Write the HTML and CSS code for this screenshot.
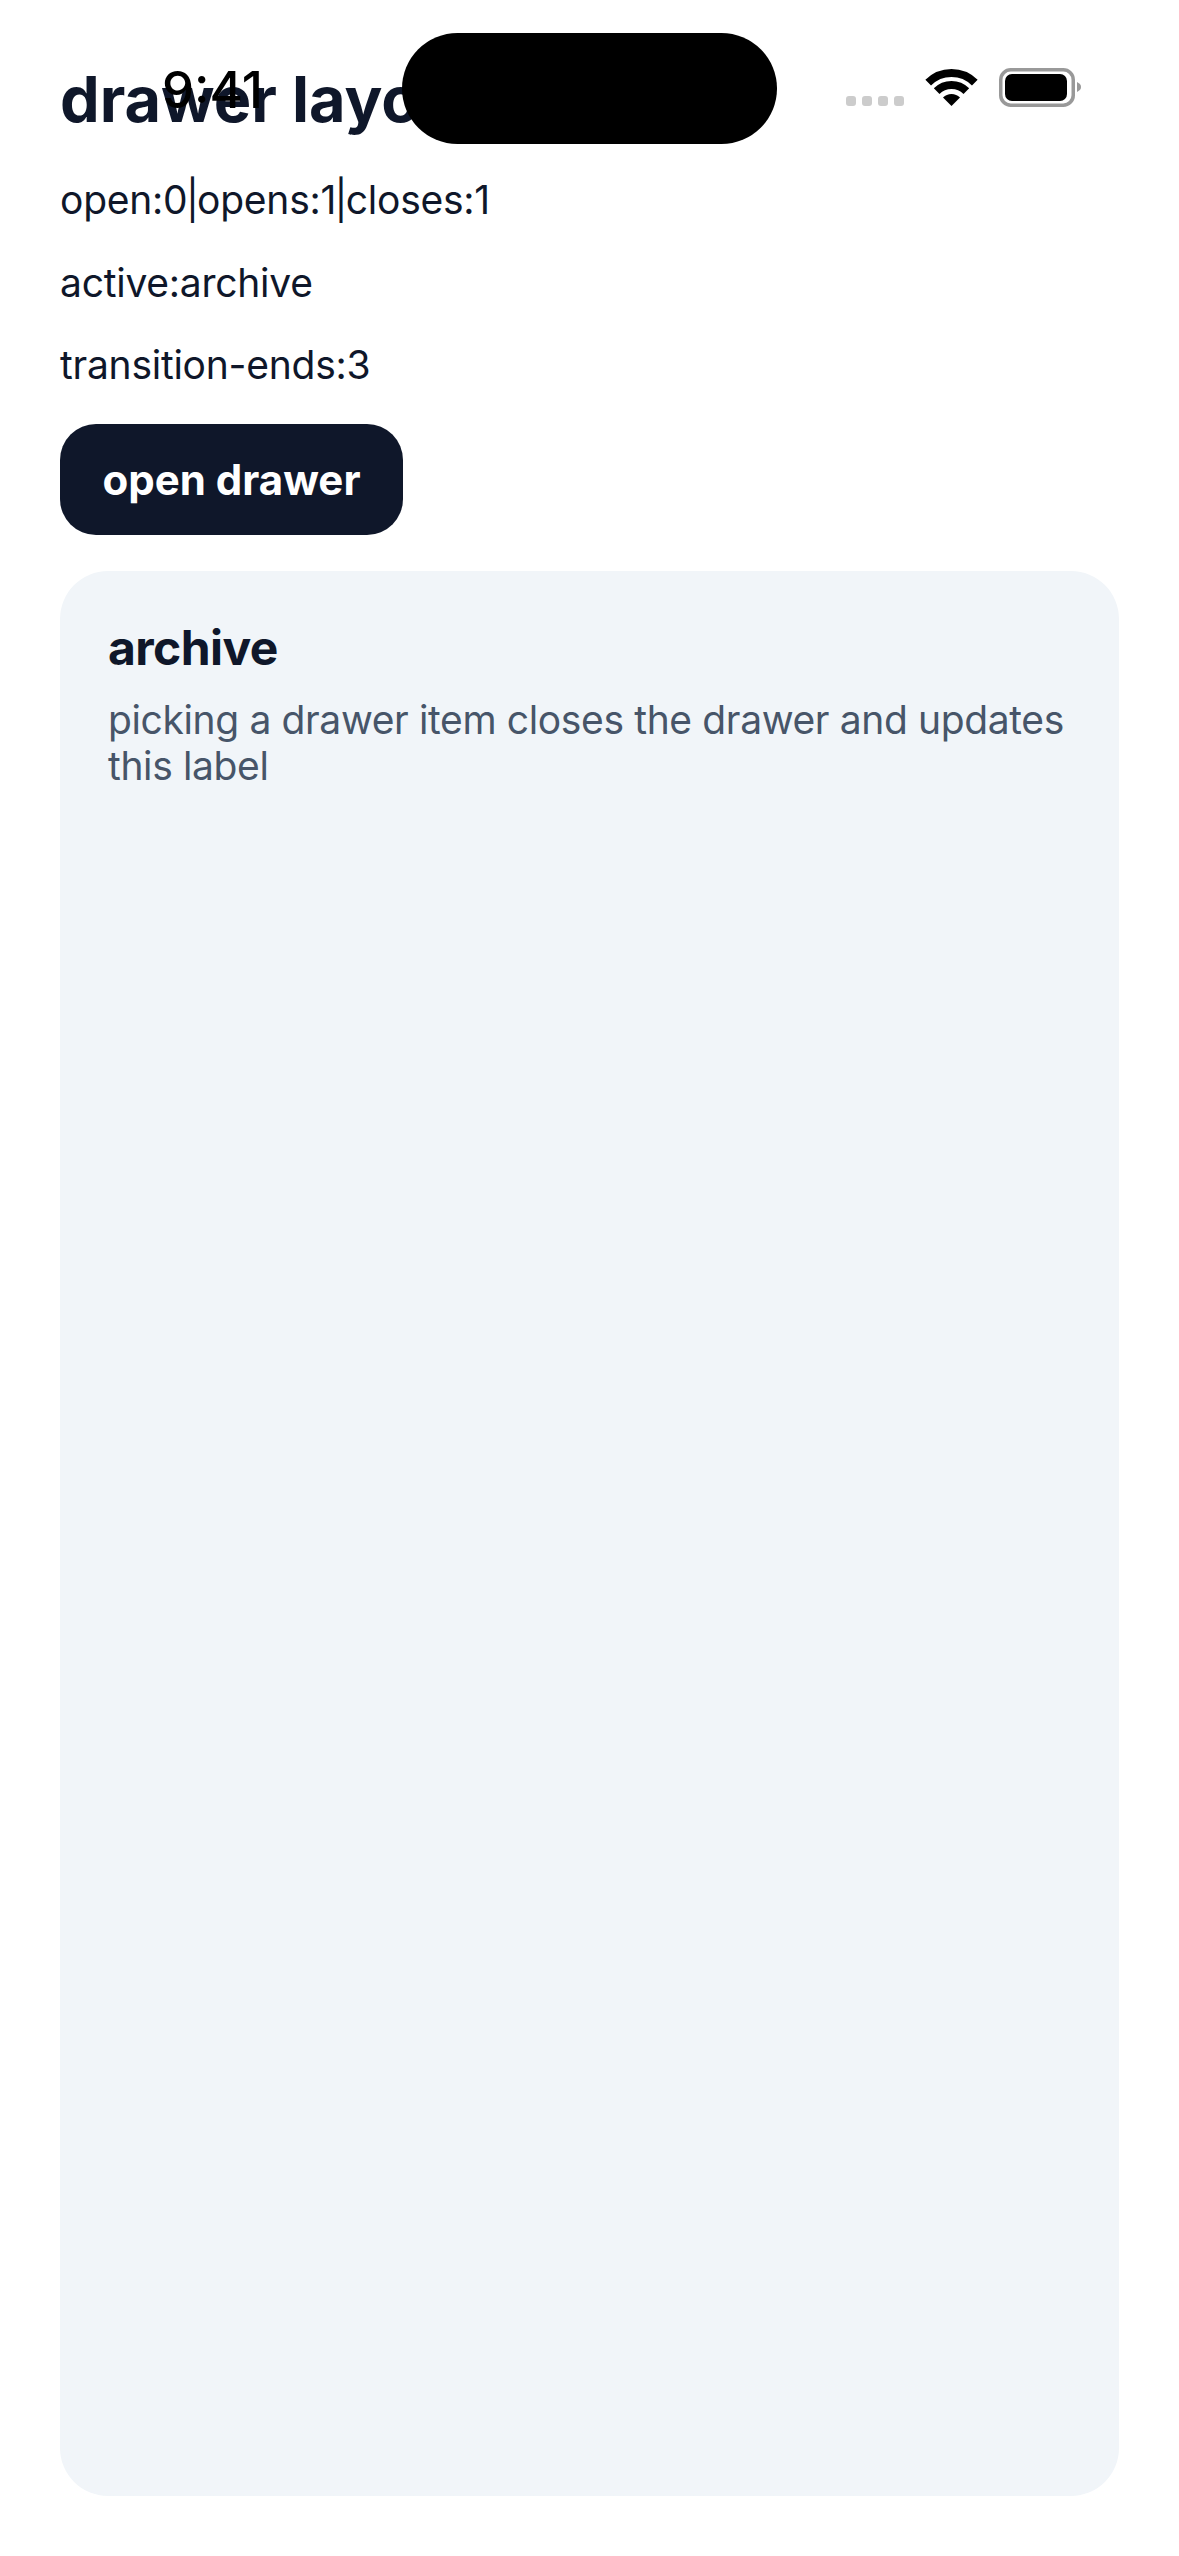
FILE: index.html
```html
<!DOCTYPE html>
<html lang="en">
<head>
<meta charset="utf-8">
<title>drawer layout</title>
<link rel="stylesheet" href="styles.css">
</head>
<body>
<div class="status">
  <div class="time">9:41</div>
  <div class="island"></div>
  <svg class="sys" viewBox="0 0 235 39" width="235" height="39" aria-hidden="true">
    <g fill="#ccc">
      <rect x="0" y="28" width="10" height="10" rx="3"/>
      <rect x="16" y="28" width="10" height="10" rx="3"/>
      <rect x="32" y="28" width="10" height="10" rx="3"/>
      <rect x="48" y="28" width="10" height="10" rx="3"/>
    </g>
    <g fill="none" stroke="#000" stroke-width="8">
      <path d="M82.2 14.7A33 33 0 0 1 128.8 14.7"/>
      <path d="M90.65 23.15A21 21 0 0 1 120.35 23.15"/>
    </g>
    <path d="M105.5 38L97 29.5A12 12 0 0 1 114 29.5Z" fill="#000"/>
    <rect x="154.75" y="1.75" width="72.5" height="35.500" rx="10" fill="none" stroke="#999" stroke-width="3.5"/>
    <rect x="159" y="6" width="62" height="27" rx="7" fill="#000"/>
    <path d="M231 14C234 15.500 235 17 235 19S234 22.500 231 24Z" fill="#999"/>
  </svg>
</div>
<main class="page">
  <h1 class="title">drawer layout</h1>
  <p class="line">open:0<span class="sep">|</span>opens:1<span class="sep">|</span>closes:1</p>
  <p class="line">active:archive</p>
  <p class="line">transition-ends:3</p>
  <button class="open" type="button">open drawer</button>
  <section class="panel">
    <h2 class="panel-title">archive</h2>
    <p class="panel-text">picking a drawer item closes the drawer and updates this label</p>
  </section>
</main>
</body>
</html>
```
FILE: styles.css
```css
* { box-sizing: border-box; }
html, body { margin: 0; height: 100%; background: #fff; }
body { font-family: Inter, "Noto Sans", sans-serif; color: #0f172a; position: relative; overflow: hidden; }
.page { height: 2556px; padding: 61px 60px 60px; display: flex; flex-direction: column; }
.title { margin: 0 0 39px; font-size: 63px; line-height: 76px; font-weight: 700; }
.line { margin: 0 0 35.5px; font-size: 39px; line-height: 47px; letter-spacing: -0.25px; }
.sep { margin: 0 -1.5px; }
.open { align-self: flex-start; width: 343px; height: 111px; margin: 0 0 36px; border: 0; border-radius: 36px; background: #0f172a; color: #fff; font: 700 42px/51px Inter, sans-serif; padding: 0; }
.panel { flex: 1; background: #f1f5f9; border-radius: 48px; padding: 48px; }
.panel-title { margin: 0 0 20px; font-size: 48px; line-height: 58px; font-weight: 700; letter-spacing: -0.6px; }
.panel-text { margin: 0; font-size: 39px; line-height: 46px; color: #475569; letter-spacing: -0.37px; }
.status { position: absolute; top: 33px; left: 0; width: 100%; height: 111px; display: flex; align-items: flex-start; z-index: 2; }
.time { width: 402px; padding: 26px 0 0 162px; font-size: 51px; line-height: 62px; font-weight: 500; color: #000; }
.island { width: 375px; height: 111px; border-radius: 56px; background: #000; }
.sys { margin: 35px 0 0 69px; display: block; }
```
